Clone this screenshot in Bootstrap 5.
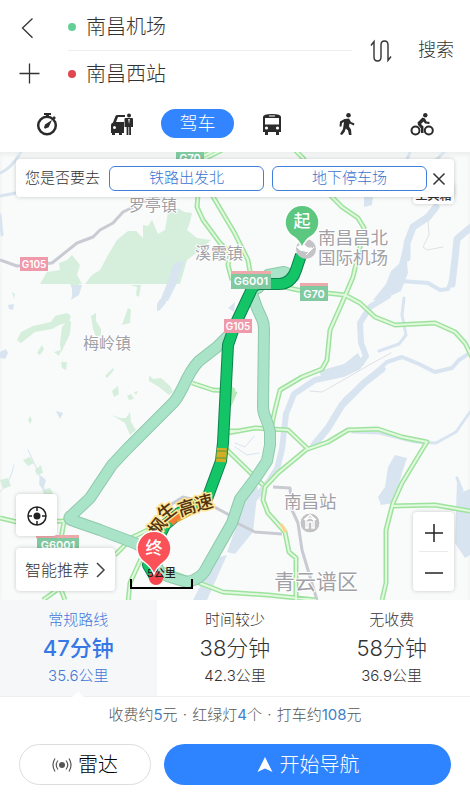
<!DOCTYPE html>
<html lang="zh-CN">
<head>
<meta charset="utf-8">
<meta name="viewport" content="width=device-width, initial-scale=1">
<title>路线规划</title>
<link href="https://cdn.jsdelivr.net/npm/bootstrap@5.3.0/dist/css/bootstrap.min.css" rel="stylesheet">
<style>
  body { font-family: Inter, "Noto Sans CJK SC", sans-serif; color: #333; background: #fff; }
  .search-head { padding: 4px 16px 0 15px; }
  .icon-btn { width: 29px; height: 46px; padding: 0; border: 0; background: none; color: #333; }
  .place-row { height: 46px; gap: 10px; }
  .place-row + .place-row { border-top: 1px solid #eee; }
  .place-row input { font-size: 20px; line-height: 28px; color: #333; font-weight: 300; }
  .place-dot { width: 8px; height: 8px; flex: none; }
  .dot-start { background: #63cf97; }
  .dot-end { background: #e0474f; }
  .search-btn { font-size: 18px; line-height: 24px; color: #333; font-weight: 300; }
  .mode-tabs { padding: 13px 10px 14px; }
  .mode-tabs button { height: 29px; padding: 0; border: 0; color: #2b2b2b; background: none; border-radius: 15px; }
  .mode-tabs .active { background: #3385ff; color: #fff; font-size: 18px; line-height: 28px; width: 73px; font-weight: 300; }
  .map-area { min-height: 448px; background: #f9fafa; box-shadow: inset 0 3px 4px #0000000d; }
  .map-overlay { padding: 7px 16px 9px; }
  .float-box { background: #fff; border: 0; border-radius: 4px; box-shadow: 0 0 4px #00000033; color: #333; font-weight: 300; }
  .suggest { height: 38px; padding: 0 8px 0 9px; gap: 8px; font-size: 15px; z-index: 1; }
  .suggest .choice { height: 25px; padding: 0; border: 1px solid #4080dc; border-radius: 6px; color: #3874cf; background: #fff; font-size: 15px; line-height: 22px; font-weight: 300; }
  .suggest .question { margin-right: 1px; }
  .suggest .close-x { width: 14px; padding: 0; border: 0; background: none; margin-left: -3px; }
  .toolbox { margin-top: -14px; width: 41px; height: 21px; padding: 0; font-size: 12px; line-height: 16px; font-weight: 500; }
  .locate { width: 41px; height: 42px; padding: 0; }
  .smart { height: 43px; padding: 0 9px; font-size: 16px; gap: 6px; }
  .zoom-box { width: 41px; }
  .zoom-box button { height: 39px; padding: 0; border: 0; background: none; color: #222; }
  .zoom-box hr { margin: 0 6px; border-color: #aaa; }
  .route-opt { height: 97px; border: 0; border-bottom: 1px solid #eee; background: #fff; color: #333; padding: 8px 0 0; font-size: 15px; line-height: 24px; font-weight: 300; }
  .route-opt strong { font-size: 22px; line-height: 32px; font-weight: 300; }
  .route-opt.chosen { background: #f6f7f8; color: #3f78d8; }
  .route-opt.chosen strong { font-weight: 500; color: #3678e5; }
  .notch { bottom: -1px; }
  .fees { font-size: 15px; line-height: 24px; padding: 6px 0 17px; color: #555; font-weight: 300; }
  .fees b { font-weight: 400; color: #3f80c9; }
  .fees .sep { padding: 0 1px; }
  .actions { padding: 0 19px 15px; gap: 13px; }
  .actions button { height: 41px; border-radius: 21px; font-size: 20px; line-height: 28px; padding: 0; gap: 6px; font-weight: 300; }
  .radar { width: 132px; border: 1px solid #ddd; background: #fff; color: #000; }
  .go { background: #2e83ff; color: #fff; border: 0; }

  .map-area text { font-family: Inter, "Noto Sans CJK SC", sans-serif; }
  .green-edge { stroke: #9de39d; stroke-width: 5; }
  .green-core { stroke: #e2f9e0; stroke-width: 2; }
  .place-name { fill: #a0a1a6; stroke: #fff; stroke-width: 2px; paint-order: stroke; }
  .shield { fill: #fff; font-size: 11px; font-weight: 600; text-anchor: middle; }
  .shield .narrow { font-size: 10px; }
</style>
<script src="https://cdn.jsdelivr.net/npm/bootstrap@5.3.0/dist/js/bootstrap.bundle.min.js"></script>
</head>
<body class="d-flex flex-column min-vh-100">

<header>
  <div class="search-head d-flex align-items-center">
    <div class="d-flex flex-column">
      <button class="icon-btn" aria-label="返回"><svg width="29" height="24" fill="none" stroke="currentColor" stroke-width="1.3"><path d="M17.500 2.500 7.500 12l10 9.800"/></svg></button>
      <button class="icon-btn" aria-label="添加途经点"><svg width="29" height="24" fill="none" stroke="currentColor" stroke-width="1.3"><path d="M4.500 11.500h20M14.500 1.500v20"/></svg></button>
    </div>
    <div class="flex-grow-1 ms-4">
      <div class="place-row d-flex align-items-center">
        <span class="place-dot dot-start rounded-circle"></span>
        <input class="form-control border-0 bg-transparent p-0" aria-label="起点" value="南昌机场">
      </div>
      <div class="place-row d-flex align-items-center">
        <span class="place-dot dot-end rounded-circle"></span>
        <input class="form-control border-0 bg-transparent p-0" aria-label="终点" value="南昌西站">
      </div>
    </div>
    <button class="btn border-0 p-0 ms-3 me-4 flex-shrink-0" aria-label="交换起终点"><svg width="26" height="24" fill="none" stroke="#333" stroke-width="1.4"><path d="M3 6.500 6 2.500v15.500q0 4 3.500 4t3.500-4V6q0-4 3.500-4t3.500 4v15.500l3-4"/></svg></button>
    <button class="search-btn btn border-0 p-0 flex-shrink-0">搜索</button>
  </div>

  <nav class="mode-tabs row row-cols-6 g-0 text-center" aria-label="出行方式">
    <div class="col"><button aria-label="智能"><svg width="24" height="24"><path d="M9 1h7v2h-2v2h-3V3H9zM19 4l2 2-2 1.500L17.500 6z" fill="currentColor"/><circle cx="12" cy="13.500" r="8.800" fill="none" stroke="currentColor" stroke-width="2.500"/><path d="m17 8-3.300 7.300-3.700 1.500-1-1.300 1-3z" fill="currentColor"/></svg></button></div>
    <div class="col"><button aria-label="打车"><svg width="24" height="24" fill="currentColor"><path d="M1 13q0-2 2-2.500L5.500 4Q6 3 7.500 3H15v2H8l-2 5h8v11h-2v2H9v-2H5v2H2v-2H1z"/><circle cx="4.500" cy="15.500" r="1.500" fill="#fff"/><circle cx="19" cy="3.500" r="2"/><path d="M14.500 7q0-1 1-1h6.500q1 0 1 1v8h-2v8h-1.800v-8h-.8v8h-1.800v-8h-2z"/><path d="m18.200 7 .8 5 .8-5z" fill="#fff"/></svg></button></div>
    <div class="col"><button class="active" aria-current="page">驾车</button></div>
    <div class="col"><button aria-label="公交"><svg width="24" height="24"><path d="M3 5q0-3 9-3t9 3v15h-2v3h-3v-3H8v3H5v-3H3z" fill="currentColor"/><path d="M5 6h14v6.500H5zM9 3.500h6v1H9z" fill="#fff"/><circle cx="6.500" cy="16" r="1.600" fill="#fff"/><circle cx="17.500" cy="16" r="1.600" fill="#fff"/></svg></button></div>
    <div class="col"><button aria-label="步行"><svg width="24" height="24"><circle cx="13.500" cy="3.200" r="2.300" fill="currentColor"/><path d="M9.500 7 14 6.500l2 3.500 3.500 1.500-.7 2-4.300-2-.5 3 2 3 .5 5.500h-2.500L13 18.500l-2.200-2L9.500 20 7 23l-2-1 3-5 1-7-2 1-.5 3.500h-2L5 9.500z" fill="currentColor"/></svg></button></div>
    <div class="col"><button aria-label="骑行"><svg width="24" height="24"><g fill="none" stroke="currentColor" stroke-width="2"><circle cx="5.500" cy="18.500" r="4"/><circle cx="18.800" cy="18.500" r="4"/></g><circle cx="15.300" cy="3.200" r="2.200" fill="currentColor"/><path d="m7.500 10.500 5-5 2.500 1 1.500 3 3 .5v2l-4.500-.5-1.500-2-2.500 2.500 2.500 2.500V21h-2.500v-4.500L8 13z" fill="currentColor"/></svg></button></div>
  </nav>
</header>

<main class="map-area flex-grow-1 position-relative d-flex overflow-hidden">
  <svg class="position-absolute top-0 start-0 w-100 h-100" viewBox="0 152 470 448" preserveAspectRatio="xMidYMid slice" role="img" aria-label="南昌地图">
    <!-- parks and woods -->
    <g fill="#d5efdc">
      <path d="M40 284 47 272 60 270 59 263 67 260 72 255 80 265 77 275 82 284zM85 284 92 275 100 270 108 255 117 240 128 231 136 231 143 238 143 225 148 226 152 220 158 234 165 230 168 212 178 208 184 212 192 213 190 222 187 230 197 238 211 240 200 250 187 260 180 284z"/>
      <path d="m70 284 9 0-2 12-6 4 2-8zM130 285h11l-2 12-3-2 1-8zM17 340l4-8 12-6 18-4 4-6 12-3 4 3-2 6-10 3-7 4-17 3-14 11zM62 327l6-7 3 2-1 12-4 8-5 11-1-9zM91 316l5-3 0 8 5 8 0 6-4 4-4-10zM122 325l6-17 3 2-1 13-8 2zM37 353l5-8 2 4-4 6zM61 362l6 0-1 8-4-2zM105 376l8-8 1 2-7 8zM149 375l4 4 8-1 9 8 3 6-4 3-10-8-10-6zM112 391l6-5 1 8-5 3zM112 415l8 3 6 0 4-6 1 10 5 8-6 5-5-12zM23 460l7-3 4 6-6 3zM35 470l6-5 2 8-6 2zM0 480l8-2 3 8-8 3z"/>
      <path d="m12 292 3 2-1 5zM127 396l4-2 3 5-5 1zM28 420l2-4 2 4-2 4zM42 490l8-2 4 7-8 2zM54 352l7-2-2 6zM134 392l4-1-2 4z"/>
    </g>
    <!-- lakes and rivers -->
    <g fill="#d8e5f0">
      <path d="m174 263 10-2-7 22-9 18h-8l8-20zM72 285h10l-3 10-7 4zM157 304l3-5 6-1 0 5-6 7-3 1zM56 411l7 2-3 6zM8 305l6-1-1 6-4-1zM0 352l6-3 2 4-3 6-5-1zM228 308l7-6-1 10z"/>
      <path d="m388 467 7-12 12 3-5 15-8 30-13 2-3-8 7-10zM457 480l5 12 8-3v66l-5 3-10-15zM405 240l3 33-7 18-19 9h-9l13-16 5-13 8-7zM364 195l9 0-1 10-8 2zM248 485l10 2-5 45-18 22-8-2 10-27zM193 600l22-42 12-3-20 45z"/>
      <path d="M358 353 344 364l-25 7 3 8 28-6 14-8zM15 514l16-3-2 6-12 3zM40 475l6 5-3 10-4-6z"/>
    </g>
    <g fill="none" stroke="#d8e5f0" stroke-linejoin="round" stroke-linecap="round">
      <path stroke-width="6" d="m388 296-18 11-10 16 1 20 5 13-8 11-15 7-28 6-21 14-8 20-4 35-5 20-10 15-17 20"/>
      <path stroke-width="7" d="m436 207-8 10-15 10-6 16v15m45 26 3-25 2-20 13-11"/>
      <path stroke-width="4" d="m400 281 28 2 12 7 8-1 4-11m18 75-11 7-7 8-17 4-16-8-17-7-15 5-20 18-22 19-15 25-15 22m92-75"/>
      <path stroke-width="3" d="m404 298-2 17 4 20-7 9-20 7m91 61-14 20-20 11-21-1-36-9-26-1"/>
      <path stroke-width="7" d="m382 369-18 14-22 22-14 23-14 17"/>
      <path stroke-width="3" d="M0 173q11-4 21-21M0 196l16-3M0 215l2 20M436 160l8-8M407 160l3-8M457 478l5 12"/>
      <path stroke-width="1" d="M28 450q12 24 18 44M0 492q10-8 14-27M235 443l10 4 9-11M235 447l12 8 12-2"/>
      <path stroke-width="1" stroke="#dfe1e5" d="m310 391 12 1 23-13 24-14 22-12M428 220l1 15-6 12 4 3 16-3"/>
    </g>
    <!-- ordinary roads -->
    <g fill="none" stroke="#c9cbd3" stroke-width="3" stroke-linejoin="round">
      <path d="m166 194-12 3-31 15-10 11-13 7-7 7-16 6-25 20-35 3-17-6"/>
      <path d="m273 487 17 1 2 22 6 13 4 27 15 50M235 522l20 10 27 2M167 507l16-10 24 6 26 14"/>
    </g>
    <!-- expressways: wide edge, light core -->
    <defs>
      <path id="express" d="M198 195l-1 12 6 13 17 23 10 10-2 12 4 15M212 195l22 37 14 28 4 24M295 150l8 8 27 37 12 12 16 11 6 10-4 19-7 30-11 26-12 27-3 30-5 9-20 8-22 13-5 20-5 23M252 280l46 10 47 5 15 8 15 14 20 8 40-2 20 9 10 11 10 20M227 433l28-5 33 2 20 19 20-7 20-12 30-1 24 8 25 5-5 8-20 33-9 20-7 27v53l-4 17M392 506l43-1 35 6M307 449l-29 24-13 14-2 13 5 13 17 19 4 20 7 6v42M222 445l41 40M160 568l63 24 45 3 48 5M0 518l17 4 50-1M64 522l-4 22v43l5 13M57 590l-14 10M165 522l-32 15-18 18M145 550l-15 33-2 20M192 383l21 7 22 1M235 391l-6 14M220 431h20M216 150l-21 10M222 150l-20 10"/>
    </defs>
    <g fill="none" stroke-linejoin="round"><use href="#express" class="green-edge"/><use href="#express" class="green-core"/></g>
    <path d="m281 524 5 8" stroke="#ffd28a" stroke-width="3"/>
    <path d="m227 384 7 4 2 7-5 10-5 1z" fill="#b7e9b9"/>
    <!-- alternative routes -->
    <g fill="none" stroke-linejoin="round" stroke-linecap="round">
      <g stroke="#8ec9ab" stroke-width="12">
        <path id="alt-line" d="M251 291l6 17 5 11q2 4 2 10l-1 78q0 5 3 12t4 13v13l-3 16-12 18-15 20-8 24-25 44q-5 12-20 15l-20-6M231 333l-14 14-18 14q-8 8-16 26-6 12-10 16l-45 45-16 17-22 33-18 17q-6 4 2 6l26 9 37 14 15 10 8 20M258 288l10-13 16-3 10 4"/>
      </g>
      <use href="#alt-line" stroke="#a9e3c8" stroke-width="10"/>
    </g>
    <!-- selected route -->
    <g fill="none" stroke-linejoin="round">
      <path d="M301 255l-5 15q-5 14-17 14h-19q-7 0-10 9l-15 32-7 20-5 98-2 18-14 38-28 14-14 12-9 18-8 22 7 12" stroke="#0d824e" stroke-width="12"/>
      <path d="M301 255l-5 15q-5 14-17 14h-19q-7 0-10 9l-15 32-7 20-5 98-2 18-14 38-28 14-14 12-9 18-8 22 7 12" stroke="#14c568" stroke-width="10"/>
      <path d="m222 448-1 14M190 510l-15 8" stroke="#d5ad25" stroke-width="10"/>
      <path d="M217 451h11M216 458h11" stroke="#4e9b3c" stroke-width="1"/>
      <path d="m178 514-8 8" stroke="#f47b35" stroke-width="9"/>
    </g>
    <!-- road shields -->
    <g>
      <path fill="#ecaaaa" d="M231 271h40v3h-40zM300 283h28v3h-28zM36 535h43v3H36z"/>
      <path fill="#80c9a1" d="M231 274h40v15h-40zM300 286h28v15h-28zM37 538h42v14H37zM176 152h28v9h-28z"/>
      <path fill="#ef9aab" d="M20 257h28v14H20zM224 319h28v14h-28z"/>
      <g class="shield"><text x="251" y="285">G6001</text><text x="314" y="298">G70</text><text x="58" y="549">G6001</text><text x="190" y="162">G70</text><text class="narrow" x="34" y="268">G105</text><text class="narrow" x="238" y="330">G105</text></g>
    </g>
    <!-- place names -->
    <g class="place-name" font-size="16">
      <text x="129" y="211">罗亭镇</text><text x="195" y="259">溪霞镇</text><text x="83" y="349">梅岭镇</text>
      <g font-size="17.500"><text x="318" y="244">南昌昌北</text><text x="318" y="264">国际机场</text><text x="284" y="508">南昌站</text></g>
      <text x="274" y="589" font-size="21">青云谱区</text>
    </g>
    <circle cx="306" cy="249" r="10" fill="#c4c4c8"/><path d="m297 247 6-3 5 4 4 0-3 4-9-2zM306 255l8-8" fill="#fff" stroke="#fff"/>
    <circle cx="310" cy="523" r="10" fill="#c3c3c5" stroke="#fff"/><path d="M306 528v-8q4-4 8 0v8h-2v-6h-4v6zM304 520l6-5 6 5" fill="none" stroke="#fff" stroke-width="1.500"/>
    <!-- expressway name following the bend -->
    <g fill="#50320f" stroke="#ffe596" stroke-width="3" paint-order="stroke" font-size="18" font-weight="500" text-anchor="middle">
      <text transform="translate(158 527) rotate(-52)" y="6">枫</text><text transform="translate(167 512) rotate(-38)" y="6">生</text>
      <text transform="translate(187 508) rotate(-18)" y="6">高</text><text transform="translate(204 503) rotate(-14)" y="6">速</text>
    </g>
    <!-- start and end pins -->
    <path d="M302 248q-3-8-10-12a17 17 0 1 1 20 0q-7 4-10 12z" fill="#5cc77e" stroke="#fff" stroke-width="1.500"/>
    <text x="302" y="227" font-size="17" font-weight="500" fill="#fff" text-anchor="middle">起</text>
    <circle cx="156" cy="578" r="7" fill="#f5444c"/>
    <text x="147" y="577" font-size="11" font-weight="500" fill="#222">5公里</text>
    <path d="M154 574q-3-7-10-12a17 17 0 1 1 20 0q-7 5-10 12z" fill="#fb5158" stroke="#fff" stroke-width="1.500"/>
    <text x="154" y="554" font-size="17" font-weight="500" fill="#fff" text-anchor="middle">终</text>
    <path d="M131 579v9h61v-9" fill="none" stroke="#000" stroke-width="2"/>
  </svg>

  <div class="map-overlay position-relative flex-grow-1 d-flex flex-column">
    <div class="float-box suggest position-relative d-flex align-items-center">
      <span class="question flex-shrink-0">您是否要去</span>
      <button class="choice flex-fill">铁路出发北</button>
      <button class="choice flex-fill">地下停车场</button>
      <button class="close-x" aria-label="关闭"><svg width="14" height="14" fill="none" stroke="#333" stroke-width="1.5"><path d="m1.500 1.500 11 11m0-11-11 11"/></svg></button>
    </div>
    <button class="toolbox float-box align-self-end d-flex align-items-end justify-content-center">工具箱</button>
    <div class="mt-auto d-flex justify-content-between align-items-end">
      <div class="d-flex flex-column align-items-start gap-2">
        <button class="locate float-box mb-1" aria-label="定位"><svg width="22" height="22" fill="none" stroke="#222" stroke-width="1.5"><circle cx="11" cy="11" r="9"/><circle cx="11" cy="11" r="3.500" fill="#222" stroke="none"/><path d="M11 2v4m0 10v4M2 11h4m10 0h4"/></svg></button>
        <button class="smart float-box d-flex align-items-center">智能推荐<svg width="11" height="18" fill="none" stroke="#444" stroke-width="1.500"><path d="m2 2 7 7-7 7"/></svg></button>
      </div>
      <div class="zoom-box float-box d-flex flex-column">
        <button aria-label="放大"><svg width="18" height="18" stroke="currentColor" stroke-width="1.500"><path d="M0 9h18M9 0v18"/></svg></button>
        <hr>
        <button aria-label="缩小"><svg width="18" height="18" stroke="currentColor" stroke-width="1.500"><path d="M0 9h18"/></svg></button>
      </div>
    </div>
  </div>
</main>

<footer>
  <div class="row row-cols-3 g-0">
    <button class="col route-opt chosen position-relative d-flex flex-column align-items-center"><span>常规路线</span><strong>47分钟</strong><span>35.6公里</span><svg class="notch position-absolute" width="12" height="5"><path d="m0 5 6-5 6 5z" fill="#fff"/></svg></button>
    <button class="col route-opt d-flex flex-column align-items-center"><span>时间较少</span><strong>38分钟</strong><span>42.3公里</span></button>
    <button class="col route-opt d-flex flex-column align-items-center"><span>无收费</span><strong>58分钟</strong><span>36.9公里</span></button>
  </div>
  <p class="fees text-center m-0">收费约<b>5</b>元 <span class="sep">·</span> 红绿灯<b>4</b>个 <span class="sep">·</span> 打车约<b>108</b>元</p>
  <div class="actions d-flex">
    <button class="radar flex-shrink-0 d-flex align-items-center justify-content-center"><svg width="20" height="16" fill="none" stroke="#555" stroke-width="1.200"><circle cx="10" cy="8" r="3" fill="#555" stroke="none"/><path d="M6 3.500q-3.500 4.500 0 9M14 3.500q3.500 4.500 0 9M3 1.500q-4 6.500 0 13M17 1.500q4 6.500 0 13"/></svg>雷达</button>
    <button class="go flex-grow-1 d-flex align-items-center justify-content-center"><svg width="18" height="18"><path d="M9 1 1.500 16 9 12.500l7.500 3.500z" fill="#fff"/></svg>开始导航</button>
  </div>
</footer>
</body>
</html>
